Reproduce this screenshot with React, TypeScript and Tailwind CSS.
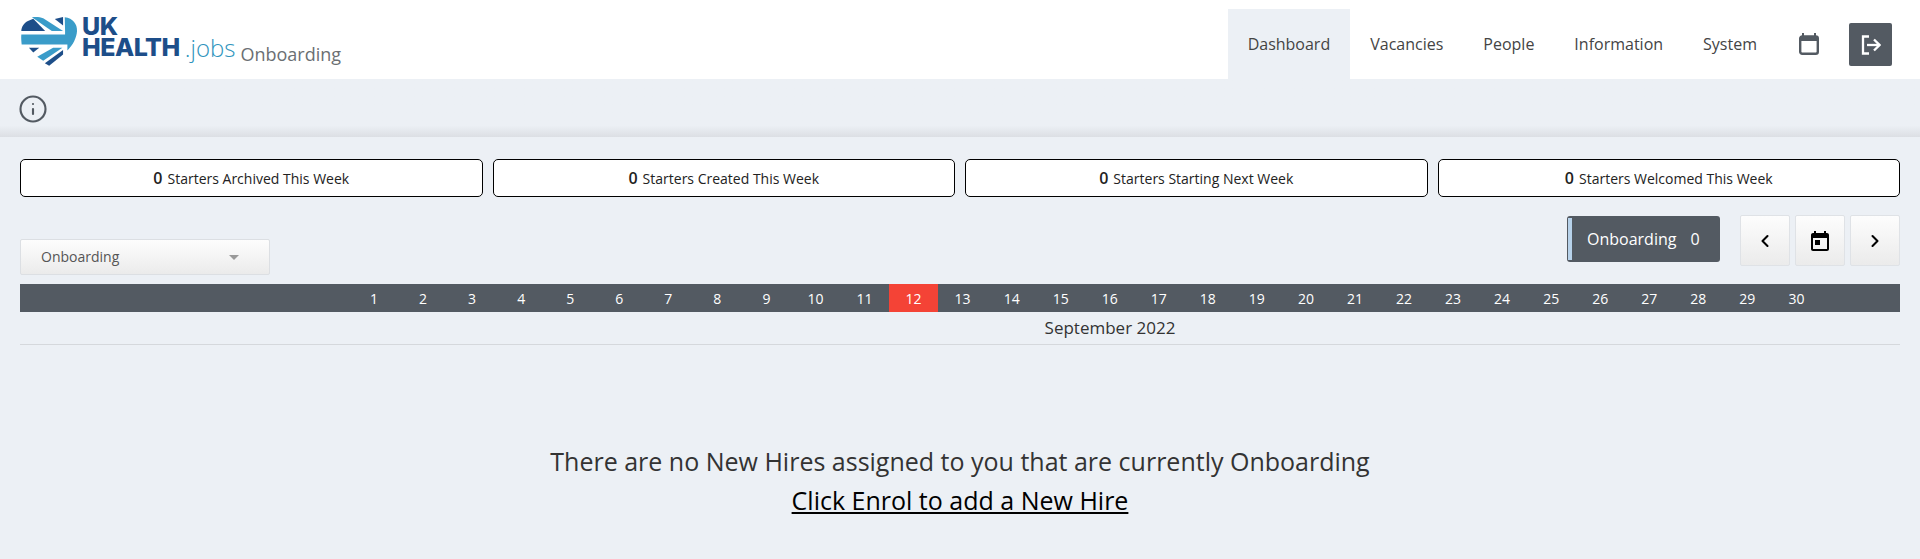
import { ChevronLeft, ChevronRight, Info } from "lucide-react";

const days = Array.from({ length: 30 }, (_, i) => i + 1);
const navItems = ["Dashboard", "Vacancies", "People", "Information", "System"];
const stats = [
  "Starters Archived This Week",
  "Starters Created This Week",
  "Starters Starting Next Week",
  "Starters Welcomed This Week",
];

function HeartLogo() {
  return (
    <svg viewBox="60 48 175 152" className="w-[58px] h-[51px] shrink-0">
      <path d="M64 92 C64 80 72 68 84 62 L100 55 L136 92 Z" fill="#1d4e89" />
      <path d="M96 51 C108 49 120 50 130 54 L190 92 L156 92 Z" fill="#3a9cc9" />
      <path d="M165 56 L190 50 L190 76 Z" fill="#1d4e89" />
      <path d="M195 51 C220 54 233 72 232 92 C231 112 220 134 203 151 L203 133 L65 133 C64 122 63 112 64 103 L196 103 L196 92 Z" fill="#3a9cc9" />
      <path d="M87 143 L118 143 L100 157 Z" fill="#1d4e89" />
      <path d="M112 170 L160 143 L188 143 L130 182 Z" fill="#3a9cc9" />
      <path d="M135 190 L190 150 L190 163 L148 197 Z" fill="#1d4e89" />
    </svg>
  );
}

function CalendarFilled() {
  return (
    <svg viewBox="0 0 24 24" className="w-6 h-6" fill="currentColor">
      <path d="M19 4h-1V2h-2v2H8V2H6v2H5c-1.100 0-2 .9-2 2v14c0 1.100.9 2 2 2h14c1.100 0 2-.9 2-2V6c0-1.100-.9-2-2-2zm0 16H5V9h14v11z" />
      <path d="M7 11h5v5H7z" />
    </svg>
  );
}

function CalendarOutline() {
  return (
    <svg viewBox="0 0 20 22" className="w-[20px] h-[22px] text-[#535a62]" fill="none" stroke="currentColor" strokeWidth="2.400">
      <rect x="1.200" y="3.500" width="17.600" height="17.300" rx="2" />
      <path d="M1.200 6h17.600" strokeWidth="4" />
      <path d="M4 0v3M16 0v3" strokeWidth="2" />
    </svg>
  );
}

function ExitIcon() {
  return (
    <svg viewBox="0 0 20 20" className="w-[20px] h-[20px]" fill="none" stroke="currentColor" strokeWidth="2.300">
      <path d="M8 1.500H2v17h6" />
      <path d="M6 10h12.500" />
      <path d="M13 4.500l5.500 5.500-5.500 5.500" />
    </svg>
  );
}

export default function App() {
  return (
    <div className="h-[559px] overflow-hidden bg-[#ecf0f5] font-['Open_Sans',sans-serif] text-[#333]">
      <header className="h-[79px] bg-white flex justify-between">
        <div className="flex items-start pl-[20px] pt-[16px]">
          <HeartLogo />
          <div className="ml-[4px] text-[#1d4e89] font-['Inter',sans-serif] font-extrabold text-[25px] leading-[21px] tracking-[-0.5px]">
            <div>UK</div>
            <div>HEALTH</div>
          </div>
          <div className="mt-[17px] ml-[5px] text-[#2f94bd] text-[24px] leading-[30px] font-light">.jobs</div>
          <div className="mt-[26px] ml-[5px] text-[#6b6f73] text-[18px] leading-[24px]">Onboarding</div>
        </div>
        <nav className="flex items-end pr-[28px] text-[16px] text-[#444]">
          {navItems.map((item, i) => (
            <a key={item} className={`h-[70px] px-[20px] flex items-center ${i === 0 ? "bg-[#ecf0f5]" : ""}`}>
              {item}
            </a>
          ))}
          <div className="h-[70px] flex items-center ml-[22px] mr-[30px]">
            <CalendarOutline />
          </div>
          <button className="mb-[13px] w-[43px] h-[43px] bg-[#535a62] rounded-[2px] flex items-center justify-center text-white">
            <ExitIcon />
          </button>
        </nav>
      </header>

      <div className="h-[58px] pl-[18px] pt-[15px] bg-gradient-to-b from-[#ecf0f5] from-[80%] to-[#dcdfe4] to-100%">
        <Info className="w-[30px] h-[30px] text-[#535a62]" strokeWidth={1.700} />
      </div>

      <main className="px-[20px] pt-[22px]">
        <div className="grid grid-cols-4 gap-[10px]">
          {stats.map((label) => (
            <div key={label} className="h-[38px] bg-white border border-black rounded-[5px] flex items-center justify-center text-[14px] text-[#222]">
              <span className="text-[16px] font-semibold text-[#222] mr-[5px]">0</span>
              {label}
            </div>
          ))}
        </div>

        <div className="flex items-start justify-between h-[69px] mt-[18px]">
          <button className="w-[250px] h-[36px] mt-[24px] pl-[20px] pr-[30px] pb-[2px] flex items-center justify-between border border-[#dcdfe3] rounded-[2px] bg-gradient-to-b from-[#fdfdfd] to-[#ebebeb] text-[14px] text-[#555]">
            Onboarding
            <span className="w-0 h-0 mt-[2px] border-x-[5px] border-x-transparent border-t-[5px] border-t-[#999]" />
          </button>
          <div className="flex items-start">
            <div className="h-[46px] w-[153px] mt-[1px] bg-[#535a62] rounded-[3px] flex items-stretch text-white text-[16px]">
              <span className="w-[4px] my-[2px] ml-[1px] bg-[#b7d2ea]" />
              <span className="ml-[15px] self-center">Onboarding</span>
              <span className="ml-[14px] self-center">0</span>
            </div>
            <div className="flex gap-[5px] ml-[20px] text-black">
              <button className="w-[50px] h-[51px] border border-[#dfe2e6] rounded-[2px] bg-gradient-to-b from-[#fdfdfd] to-[#ebebeb] flex items-center justify-center">
                <ChevronLeft className="w-[20px] h-[20px]" strokeWidth={2.500} />
              </button>
              <button className="w-[50px] h-[51px] border border-[#dfe2e6] rounded-[2px] bg-gradient-to-b from-[#fdfdfd] to-[#ebebeb] flex items-center justify-center">
                <CalendarFilled />
              </button>
              <button className="w-[50px] h-[51px] border border-[#dfe2e6] rounded-[2px] bg-gradient-to-b from-[#fdfdfd] to-[#ebebeb] flex items-center justify-center">
                <ChevronRight className="w-[20px] h-[20px]" strokeWidth={2.500} />
              </button>
            </div>
          </div>
        </div>

        <div className="h-[28px] bg-[#535a62] flex pl-[329px] text-white text-[14px]">
          {days.map((d) => (
            <div key={d} className={`w-[49.050px] pl-[1px] flex items-center justify-center ${d === 12 ? "bg-[#f44336]" : ""}`}>
              {d}
            </div>
          ))}
        </div>
        <div className="h-[33px] pl-[300px] border-b border-[#d5d8dc] text-center text-[17px] text-[#333] leading-[32px]">
          September 2022
        </div>

        <div className="mt-[97px] text-center text-[25px] leading-[39px] text-[#333]">
          <p>There are no New Hires assigned to you that are currently Onboarding</p>
          <a className="text-black underline">Click Enrol to add a New Hire</a>
        </div>
      </main>
    </div>
  );
}
